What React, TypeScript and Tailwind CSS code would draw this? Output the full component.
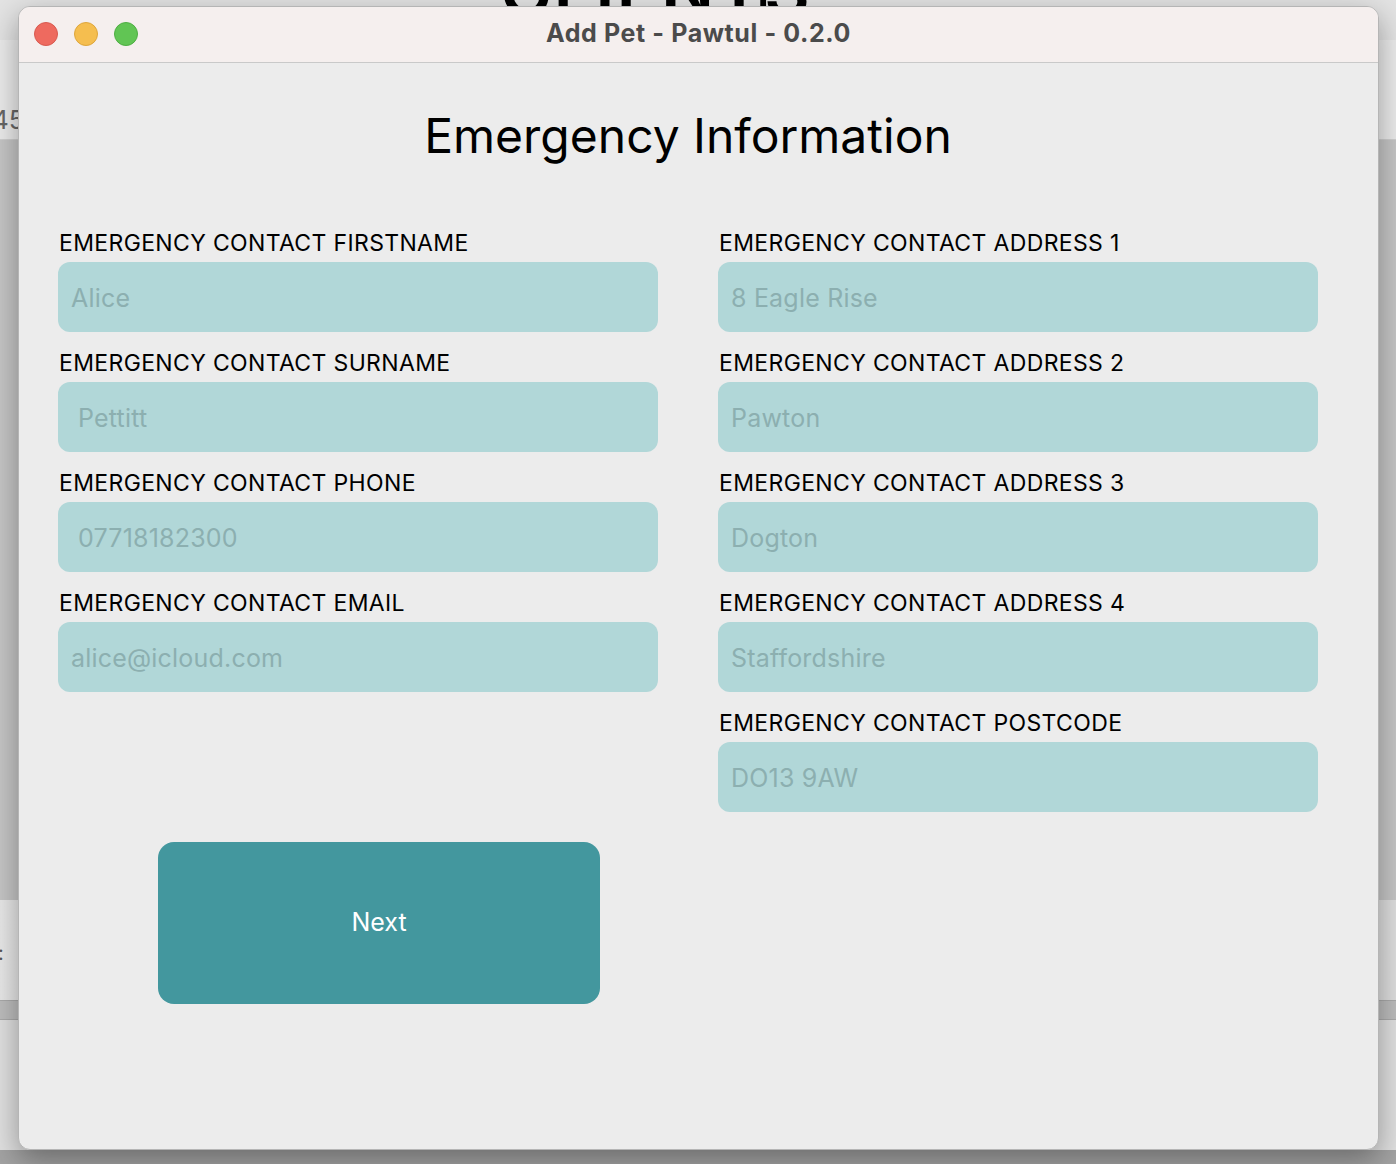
import React from "react";

const font = { fontFamily: "Inter, 'Noto Sans', sans-serif" };

function Field({ label, value, pad }: { label: string; value: string; pad: string }) {
  return (
    <div className="flex flex-col">
      <div className="h-[30px] flex items-center text-[23px] leading-none text-black tracking-[0.35px] pl-px">{label}</div>
      <div className={`mt-[4px] h-[70px] rounded-[12px] bg-[#b1d7d8] flex items-center pt-[3px] ${pad} text-[25px] tracking-[0.2px] text-[#8cafb0]`}>
        {value}
      </div>
    </div>
  );
}

export default function App() {
  return (
    <div className="relative w-[1396px] h-[1164px] overflow-hidden" style={font}>
      {/* background app */}
      <div className="flex flex-col w-full h-full">
        <div className="h-[40px] bg-[#e3e3e3]" />
        <div className="h-[100px] bg-[#ebebeb] border-b border-[#d0d0d0]" />
        <div className="h-[760px] bg-[#c6c6c6]" />
        <div className="h-[100px] bg-gradient-to-r from-[#e8e8e8] to-[#dedede]" />
        <div className="h-[20px] bg-[#bdbdbd] border-y border-[#aaaaaa]" />
        <div className="h-[130px] bg-[#e0e0e0]" />
        <div className="flex-1 bg-[#a3a3a3]" />
      </div>
      <div className="absolute left-[500px] top-[-62px] text-[70px] font-semibold text-black tracking-[2px]">CLIENTS</div>
      <div className="absolute left-[740px] top-[-62px] text-[70px] text-black">+</div>
      <div className="absolute left-[-8px] top-[100px] text-[26px] text-[#666]">45</div>
      <div className="absolute left-[-2px] top-[938px] text-[20px] text-[#555]">:</div>

      {/* window */}
      <div className="absolute left-[18px] top-[6px] w-[1361px] h-[1144px] rounded-[12px] bg-[#ececec] overflow-hidden border border-[#b5b5b5] shadow-[0_10px_30px_rgba(0,0,0,0.35)] flex flex-col">
        <div className="h-[56px] shrink-0 bg-[#f5efee] border-b border-[#c9c9c9] relative flex items-center justify-center">
          <div className="absolute left-[15px] top-[15px] flex gap-[16px]">
            <div className="w-[24px] h-[24px] rounded-full bg-[#ee6a5f] border border-[#d85a50]" />
            <div className="w-[24px] h-[24px] rounded-full bg-[#f5be4f] border border-[#dea63c]" />
            <div className="w-[24px] h-[24px] rounded-full bg-[#61c554] border border-[#4eae43]" />
          </div>
          <div className="text-[25px] font-bold text-[#4b4b4b] tracking-[0.6px] pb-[2px]">Add Pet - Pawtul - 0.2.0</div>
        </div>
        <div className="flex-1 pl-[39px] pr-[60px] flex flex-col">
          <div className="h-[146px] mb-[19px] flex items-center justify-center text-[48px] text-black">Emergency Information</div>
          <div className="grid grid-cols-2 gap-x-[60px]">
            <div className="flex flex-col gap-[16px]">
              <Field label="EMERGENCY CONTACT FIRSTNAME" value="Alice" pad="pl-[13px]" />
              <Field label="EMERGENCY CONTACT SURNAME" value="Pettitt" pad="pl-[20px]" />
              <Field label="EMERGENCY CONTACT PHONE" value="07718182300" pad="pl-[20px]" />
              <Field label="EMERGENCY CONTACT EMAIL" value="alice@icloud.com" pad="pl-[13px]" />
            </div>
            <div className="flex flex-col gap-[16px]">
              <Field label="EMERGENCY CONTACT ADDRESS 1" value="8 Eagle Rise" pad="pl-[13px]" />
              <Field label="EMERGENCY CONTACT ADDRESS 2" value="Pawton" pad="pl-[13px]" />
              <Field label="EMERGENCY CONTACT ADDRESS 3" value="Dogton" pad="pl-[13px]" />
              <Field label="EMERGENCY CONTACT ADDRESS 4" value="Staffordshire" pad="pl-[13px]" />
              <Field label="EMERGENCY CONTACT POSTCODE" value="DO13 9AW" pad="pl-[13px]" />
            </div>
          </div>
          <div className="mt-[30px] ml-[100px] w-[442px] h-[162px] rounded-[16px] bg-[#43979e] flex items-center justify-center text-[25px] text-white">
            Next
          </div>
        </div>
      </div>
    </div>
  );
}
